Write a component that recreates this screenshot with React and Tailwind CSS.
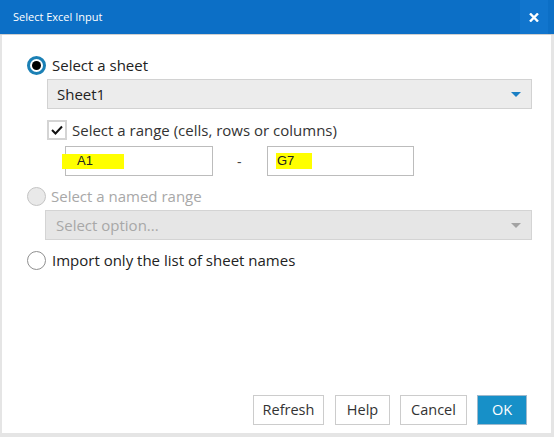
import React from 'react'

function Radio({ state }) {
  if (state === 'checked') {
    return (
      <span className="flex h-[19px] w-[19px] shrink-0 items-center justify-center rounded-full border-[3px] border-[#1b80b5] bg-white">
        <span className="h-[9px] w-[9px] rounded-full bg-black" />
      </span>
    )
  }
  if (state === 'disabled') {
    return <span className="h-[19px] w-[19px] shrink-0 rounded-full border border-[#c4c4c4] bg-[#e9e9e9]" />
  }
  return <span className="h-[19px] w-[19px] shrink-0 rounded-full border border-[#8f8f8f] bg-white" />
}

function Caret({ color }) {
  return (
    <svg width="10" height="5" viewBox="0 0 10 5" className="shrink-0">
      <path d="M0 0 L10 0 L5 5 Z" fill={color} />
    </svg>
  )
}

function Btn({ children, primary, w }) {
  return (
    <button
      className={
        primary
          ? 'flex h-[30px] items-center justify-center border border-[#9fb9cc] bg-[#1790c8] text-[14.5px] text-white ' + w
          : 'flex h-[30px] items-center justify-center border border-[#cccccc] bg-white text-[14.5px] text-[#333] ' + w
      }
    >
      {children}
    </button>
  )
}

export default function App() {
  return (
    <div className="flex h-[437px] w-[554px] flex-col bg-[#e5e5e5] font-['Segoe_UI','Open_Sans',sans-serif] text-[#222]">
      {/* title bar */}
      <div className="flex h-[34px] shrink-0 items-stretch bg-[#0c6fc6]">
        <div className="flex flex-1 items-center pl-[13px] text-[11px] text-white">Select Excel Input</div>
        <div className="mr-[6px] flex w-[28px] items-center justify-center bg-[#1175cd]">
          <svg width="10" height="9" viewBox="0 0 10 9">
            <path d="M1 0.5 L9 8.5 M9 0.5 L1 8.5" stroke="white" strokeWidth="2.4" />
          </svg>
        </div>
      </div>
      <div className="h-px shrink-0 bg-[#cfcfcf]" />

      {/* body */}
      <div className="ml-[2px] mr-[3px] mb-[4px] flex flex-1 flex-col bg-white pl-[25px] pr-[19px]">
        <div className="mt-[21px] flex h-[19px] items-center gap-[6px] text-[15px]">
          <Radio state="checked" />
          <span>Select a sheet</span>
        </div>

        <div className="ml-[20px] mt-[4px] flex h-[30px] items-center justify-between border border-[#d2d2d2] bg-[#ececec] pl-[9px] pr-[10px] text-[15px]">
          <span>Sheet1</span>
          <Caret color="#1a7fc4" />
        </div>

        <div className="ml-[20px] mt-[11px] flex h-[20px] items-center gap-[5px] text-[15px]">
          <span className="flex h-[20px] w-[20px] items-center justify-center border-2 border-[#d4d4d4] bg-white">
            <svg width="12" height="10" viewBox="0 0 12 10">
              <path d="M1 5 L4.5 8.5 L11 1.5" fill="none" stroke="#111" strokeWidth="2" />
            </svg>
          </span>
          <span className="text-[#333]">Select a range (cells, rows or columns)</span>
        </div>

        <div className="ml-[38px] mt-[6px] flex h-[30px] items-center">
          <div className="flex h-[30px] w-[148px] items-center border border-[#bcbcbc] bg-white">
            <span className="ml-[-4px] flex h-[15px] w-[62px] items-center bg-[#ffff00] pl-[15px] font-['Liberation_Sans',sans-serif] text-[13px] text-[#222]">
              A1
            </span>
          </div>
          <span className="ml-[24px] w-[30px] text-[14px] text-[#444]">-</span>
          <div className="flex h-[30px] w-[147px] items-center border border-[#bcbcbc] bg-white">
            <span className="ml-[8px] flex h-[16px] w-[36px] items-center bg-[#ffff00] pl-[1px] font-['Liberation_Sans',sans-serif] text-[13px] text-[#222]">
              G7
            </span>
          </div>
        </div>

        <div className="mt-[11px] flex h-[19px] items-center gap-[5px] text-[15px] text-[#a8a8a8]">
          <Radio state="disabled" />
          <span>Select a named range</span>
        </div>

        <div className="ml-[18px] mt-[4px] flex h-[30px] items-center justify-between border border-[#d4d4d4] bg-[#e6e6e6] pl-[10px] pr-[10px] text-[15px] text-[#a8a8a8]">
          <span>Select option...</span>
          <Caret color="#a3a3a3" />
        </div>

        <div className="mt-[11px] flex h-[19px] items-center gap-[6px] text-[15px]">
          <Radio state="empty" />
          <span>Import only the list of sheet names</span>
        </div>

        <div className="mt-auto mb-[8px] flex justify-end gap-[10px] pr-[5px]">
          <Btn w="w-[71px] mr-[1px]">Refresh</Btn>
          <Btn w="w-[55px]">Help</Btn>
          <Btn w="w-[67px]">Cancel</Btn>
          <Btn primary w="w-[50px]">OK</Btn>
        </div>
      </div>
    </div>
  )
}
